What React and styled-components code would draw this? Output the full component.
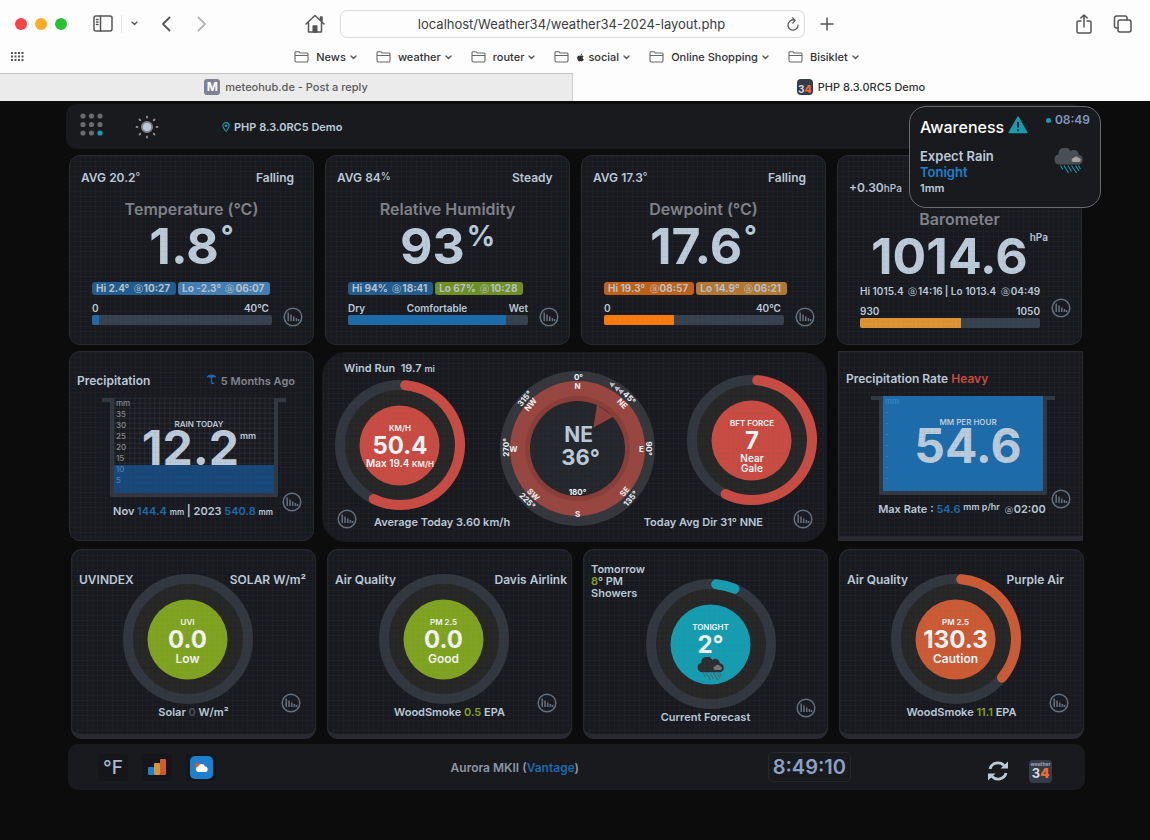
import React from 'react'
import styled, { createGlobalStyle } from 'styled-components'
import { FaApple } from 'react-icons/fa'

const ink = '#bccbd9'
const blue = '#1c6bab'
const green = '#80a41f'
const red = '#c94b41'
const teal = '#159eb1'
const orange = '#cc5b33'

const GlobalStyle = createGlobalStyle`
  * {
    box-sizing: border-box;
  }
  body {
    margin: 0;
    min-height: 100vh;
    background: #0c0c0c;
    color: ${ink};
    font-family: Inter, "Liberation Sans", sans-serif;
    font-size: 11px;
    font-weight: 600;
  }
  button {
    padding: 0;
    border: 0;
    background: none;
    color: inherit;
    font: inherit;
  }
  a {
    color: inherit;
    text-decoration: none;
  }
  svg {
    display: block;
    flex: none;
  }
  h1, h2, p, ul {
    margin: 0;
    padding: 0;
    font-size: inherit;
    font-weight: inherit;
    list-style: none;
  }
`

/* ---------- browser ---------- */

const Browser = styled.header`
  background: #fdfdfd;
  color: #333;
  font-weight: 400;
`

const Toolbar = styled.div`
  display: flex;
  align-items: center;
  height: 47px;
  padding: 0 18px 0 15px;
`

const ToolGroup = styled.div`
  display: flex;
  flex: 1;
  align-items: center;
  justify-content: ${p => p.$end ? 'flex-end' : 'flex-start'};
  gap: ${p => p.$end ? 20 : 8}px;
`

const Light = styled.span`
  width: 12px;
  height: 12px;
  border-radius: 50%;
  background: ${p => p.$color};
`

const Divider = styled.span`
  width: 1px;
  height: 18px;
  background: #e2e2e2;
`

const SidebarButton = styled.button`
  margin-left: 18px;
`

const BackButton = styled.button`
  margin: 0 18px 0 14px;
`

const AddressGroup = styled.div`
  display: flex;
  align-items: center;
  gap: 15px;
  margin-right: 8px;
`

const AddressBox = styled.div`
  display: flex;
  align-items: center;
  width: 40.5vw;
  height: 28px;
  padding: 0 4px 0 16px;
  border: 1px solid #d9d9d9;
  border-radius: 7px;
`

const AddressInput = styled.input`
  flex: 1;
  min-width: 0;
  border: 0;
  outline: 0;
  background: none;
  color: #3c3c3c;
  font: inherit;
  font-size: 13px;
  text-align: center;
`

const Bookmarks = styled.nav`
  display: flex;
  align-items: center;
  height: 26px;
  padding: 0 20px 6px 11px;
`

const BookmarkList = styled.ul`
  display: flex;
  flex: 1;
  justify-content: center;
  gap: 18px;
`

const Bookmark = styled.button`
  display: flex;
  align-items: center;
  gap: 7px;
  font-size: 11px;
  font-weight: 500;
  span {
    display: flex;
    align-items: center;
    gap: 3px;
  }
`

const Tabs = styled.div`
  display: grid;
  grid-template-columns: 573fr 577fr;
  height: 28px;
`

const Tab = styled.a`
  display: flex;
  align-items: center;
  justify-content: center;
  gap: 5px;
  padding-bottom: 2px;
  border-top: 1px solid ${p => p.$active ? '#fdfdfd' : '#c2c2c2'};
  border-right: 1px solid ${p => p.$active ? '#fdfdfd' : '#d0d0d0'};
  background: ${p => p.$active ? '#fdfdfd' : '#ebebeb'};
  color: ${p => p.$active ? '#333' : '#5a5a5a'};
  font-weight: 500;
`

const Favicon = styled.span`
  width: 16px;
  height: 16px;
  border-radius: 3px;
  background: #7f8092;
  color: #fff;
  font-size: 12px;
  font-weight: 700;
  line-height: 16px;
  text-align: center;
`

/* ---------- dashboard ---------- */

const Dashboard = styled.main`
  position: relative;
  max-width: 1020px;
  margin: 0 auto;
  padding-top: 3px;
`

const TopBar = styled.header`
  display: flex;
  align-items: center;
  height: 45px;
  margin: 0 3px 0 1px;
  padding: 0 14px;
  border-radius: 10px;
  background: #191a1e;
`

const MenuButton = styled.button`
  padding-bottom: 4px;
`

const Station = styled.p`
  display: flex;
  align-items: center;
  gap: 4px;
  margin-left: 63px;
`

const SunButton = styled.button`
  margin-left: 31px;
`

const CardRow = styled.section`
  display: grid;
  grid-template-columns: repeat(4, 1fr);
  gap: 11px;
  margin-top: 6px;
  padding: 0 3px 0 4px;
`

const MiddleRow = styled(CardRow)`
  grid-template-columns: 245fr 508fr 245fr;
  gap: 8px;
  padding-right: 2px;
`

const DialRow = styled(CardRow)`
  margin-top: 8px;
  padding: 0 1px 0 6px;
`

const Card = styled.article`
  position: relative;
  min-height: 190px;
  border: 1px solid #292a30;
  border-bottom-width: ${p => p.$thick ? 5 : 1}px;
  border-radius: ${p => p.$square ? 0 : 11}px;
  background: #191a1f;
  &::after {
    content: "";
    position: absolute;
    inset: 0;
    border-radius: inherit;
    pointer-events: none;
    background-image:
      linear-gradient(rgba(100, 102, 110, 0.06) 1px, transparent 1px),
      linear-gradient(90deg, rgba(100, 102, 110, 0.06) 1px, transparent 1px);
    background-size: 5px 5px;
  }
`

const ReadingCard = styled(Card)`
  padding-top: ${p => p.$low ? 24 : 14}px;
`

const ReadingTop = styled.div`
  display: grid;
  grid-template-columns: 1fr 57px;
  height: 16px;
  padding-left: 11px;
  font-size: 12px;
  line-height: 16px;
  small {
    font-size: 10px;
    font-weight: 500;
    line-height: 10px;
    vertical-align: ${p => p.$flat ? 0 : 2}px;
  }
`

const ReadingTitle = styled.h2`
  margin-top: 13px;
  color: #808289;
  font-size: 16px;
  line-height: 20px;
  text-align: center;
`

const Reading = styled.p`
  display: flex;
  justify-content: center;
  gap: 2px;
  margin-top: 3px;
  font-size: 50px;
  font-weight: 700;
  line-height: 48px;
  sup {
    font-size: ${p => p.$unitSize || 28}px;
    line-height: 1;
    font-weight: ${p => p.$unitSize < 20 ? 600 : 700};
  }
`

const Extremes = styled.div`
  display: flex;
  gap: 2px;
  margin-top: ${p => p.$plain ? 5 : 12}px;
  padding-left: 22px;
  font-size: 10px;
  line-height: 12px;
  white-space: nowrap;
`

const Badge = styled.span`
  padding: 0 6px 0 4px;
  border-radius: 3px;
  background: ${p => p.$color};
  color: #b9c3cc;
  font-weight: 700;
`

const At = styled.small`
  margin: 0 1px 0 2px;
  font-size: 9px;
  font-weight: 500;
`

const Scale = styled.div`
  margin: 6px 41px 0 22px;
`

const ScaleLabels = styled.div`
  display: flex;
  justify-content: space-between;
  padding-right: ${p => p.$inset || 0}px;
  font-size: 10px;
  line-height: 14px;
`

const Track = styled.div`
  height: 10px;
  overflow: hidden;
  border-radius: 2px;
  background: #36414e;
`

const Fill = styled.div`
  height: 100%;
  background: ${p => p.$color};
`

const ChartButton = styled.button`
  position: absolute;
  z-index: 1;
  bottom: ${p => p.$bottom}px;
  ${p => p.$left ? 'left: 14px;' : `right: ${p.$right || 10}px;`}
`

/* ---------- rain ---------- */

const RainCard = styled(Card)`
  padding: ${p => p.$top}px 18px 0 7px;
`

const RainTop = styled.div`
  display: flex;
  justify-content: space-between;
  align-items: center;
  line-height: 16px;
  h2 {
    font-size: 12px;
  }
`

const RainNote = styled.span`
  display: flex;
  gap: 4px;
  color: #83868d;
`

const Vessel = styled.div`
  position: relative;
  width: 168px;
  height: 99px;
  margin: 9px auto 0 33px;
  border: solid #31363f;
  border-width: 0 4px 4px;
  border-radius: 0 0 2px 2px;
  background-image:
    linear-gradient(rgba(130, 132, 140, 0.1) 1px, transparent 1px),
    linear-gradient(90deg, rgba(130, 132, 140, 0.1) 1px, transparent 1px);
  background-size: 5px 5px;
  &::before,
  &::after {
    content: "";
    position: absolute;
    top: 0;
    width: 8px;
    height: 4px;
    background: #31363f;
  }
  &::before {
    left: -12px;
  }
  &::after {
    right: -12px;
  }
`

const Water = styled.div`
  position: absolute;
  inset: auto 0 0;
  background: ${p => p.$color};
`

const VesselScale = styled.ul`
  position: absolute;
  inset: 0 auto 0 2px;
  color: ${p => p.$color};
  font-size: 8px;
  font-weight: 500;
  line-height: 11px;
`

const VesselReading = styled.div`
  position: relative;
  padding: 20px 0 0 10px;
  font-size: 8px;
  line-height: 12px;
  text-align: center;
`

const RainValue = styled.p`
  display: flex;
  justify-content: center;
  font-size: 48px;
  font-weight: 700;
  line-height: 36px;
  sup {
    margin-left: 1px;
    font-size: 9px;
    font-weight: 600;
    line-height: 12px;
  }
`

const RainFoot = styled.p`
  height: 16px;
  margin: 6px 0 0 14px;
  line-height: 16px;
  text-align: center;
  white-space: nowrap;
  small {
    font-size: 8px;
  }
  sup {
    font-size: 9px;
    line-height: 1;
    vertical-align: 3px;
  }
`

const Tint = styled.span`
  color: ${p => p.$color};
`

/* ---------- wind ---------- */

const WindCard = styled(Card)`
  margin: 1px 3px -1px 0;
  padding: 8px 9px 0 12px;
  border-color: #191a1f;
  border-radius: 24px;
`

const WindDials = styled.div`
  display: flex;
  justify-content: space-between;
  height: 154px;
`

const WindRun = styled.p`
  margin-bottom: 4px;
  padding-left: 9px;
  line-height: 14px;
  white-space: pre;
  small {
    font-size: 9px;
  }
`

const CompassWrap = styled.div`
  padding: 10px 0 0 3px;
`

const ForceWrap = styled.div`
  padding-top: 14px;
`

const WindFoot = styled.div`
  display: flex;
  justify-content: space-between;
  padding: 0 54px 0 39px;
  line-height: 14px;
`

/* ---------- dials ---------- */

const DialBox = styled.div`
  display: grid;
  place-items: center;
  width: 130px;
  height: 130px;
  > * {
    grid-area: 1 / 1;
  }
`

const DialText = styled.div`
  padding-top: ${p => p.$drop || 0}px;
  color: #f2f6f8;
  font-size: ${p => p.$small ? 10 : 12}px;
  line-height: ${p => p.$small ? 10 : 14}px;
  text-align: center;
  small {
    display: block;
    font-size: 8px;
    line-height: 12px;
  }
  strong {
    display: block;
    font-size: 24px;
    font-weight: 700;
    line-height: 24px;
  }
  em {
    font-size: 8px;
    font-style: normal;
  }
  svg {
    margin: 0 auto;
  }
`

const DialCard = styled(Card)`
  display: grid;
  grid-template-rows: 130px 16px;
  align-content: start;
  padding-top: ${p => p.$top || 24}px;
`

const DialTop = styled.div`
  display: flex;
  grid-area: 1 / 1;
  justify-content: space-between;
  height: 12px;
  padding: 0 ${p => p.$right}px 0 7px;
  font-size: 12px;
  line-height: 12px;
  white-space: nowrap;
`

const DialPlace = styled.div`
  grid-area: 1 / 1;
  justify-self: center;
  padding: ${p => p.$shiftRight ? '0 0 0 10px' : '0 12px 0 0'};
`

const DialFoot = styled.p`
  line-height: 16px;
  text-align: center;
`

const Outlook = styled.p`
  grid-area: 1 / 1;
  margin-top: -16px;
  padding-left: 7px;
  line-height: 12px;
`

/* ---------- alert and bottom bar ---------- */

const Alert = styled.aside`
  position: absolute;
  z-index: 2;
  top: 5px;
  right: -16px;
  display: grid;
  grid-template-columns: 1fr auto;
  align-content: start;
  width: 192px;
  height: 102px;
  padding: 4px 10px 0;
  border: 1px solid #6a6b6e;
  border-radius: 17px;
  background: #191a1e;
  font-size: 13px;
  line-height: 16px;
`

const AlertTitle = styled.h2`
  display: flex;
  gap: 4px;
  padding-top: 5px;
  color: #fff;
  font-size: 16px;
  font-weight: 500;
  line-height: 22px;
`

const AlertTime = styled.time`
  display: flex;
  gap: 4px;
  justify-content: flex-end;
  align-items: center;
  height: 18px;
  color: #8099bb;
  font-size: 12px;
  &::before {
    content: "";
    width: 5px;
    height: 5px;
    border-radius: 50%;
    background: ${teal};
  }
`

const AlertBody = styled.div`
  padding-top: 10px;
  small {
    display: block;
    font-size: 11px;
  }
`

const AlertIcon = styled.div`
  justify-self: end;
  padding: 10px 6px 0 0;
`

const BottomBar = styled.footer`
  display: flex;
  align-items: center;
  height: 46px;
  margin: 5px 0 0 3px;
  padding: 0 33px 0 30px;
  border-radius: 10px;
  background: #191a1e;
`

const Tile = styled.button`
  display: grid;
  place-items: center;
  width: 30px;
  height: 27px;
  margin-right: 14px;
  border-radius: 3px;
  background: #15161a;
  color: #a9b9d0;
  font-size: 19px;
  font-weight: 500;
`

const Model = styled.p`
  flex: 1;
  padding-left: 32px;
  color: #8d97a5;
  font-size: 12px;
  text-align: center;
`

const Clock = styled.time`
  padding: 0 4px;
  border: 1px solid #28292e;
  border-radius: 5px;
  color: #8aa1c3;
  font-size: 20px;
  line-height: 28px;
`

const FooterLinks = styled.div`
  display: flex;
  align-items: center;
  gap: 21px;
  margin-left: 137px;
  padding-top: 8px;
`

const Logo = styled.a`
  display: grid;
  grid-template-rows: ${p => p.$size > 20 ? 7 : 5}px 1fr;
  width: ${p => p.$size}px;
  height: ${p => p.$size}px;
  border-radius: 4px;
  background: #363b48;
  color: #d5dbe4;
  font-size: ${p => p.$size > 20 ? 13 : 10}px;
  font-weight: 700;
  line-height: 1;
  text-align: center;
  small {
    overflow: hidden;
    color: #9aa2ae;
    font-size: 5px;
    line-height: 8px;
  }
  b {
    color: #f26a33;
  }
`

/* ---------- drawings ---------- */

function Line({ w = 16, h = 16, stroke = '#555', width = 1.5, children }) {
  return (
    <svg width={w} height={h} viewBox={`0 0 ${w} ${h}`} fill="none" stroke={stroke}
      strokeWidth={width} strokeLinecap="round" strokeLinejoin="round" aria-hidden="true">
      {children}
    </svg>
  )
}

const Chevron = () => <Line w={9} h={5} width={1.4}><path d="M2 1l2.500 2.500L7 1" /></Line>

function ChartIcon() {
  return (
    <Line w={20} h={20} stroke="#637180" width={1.5}>
      <circle cx="10" cy="10" r="8.800" />
      <path strokeLinecap="butt" d="M5.200 5.500V14M8 7.500V14M10.700 9.500V14M13.400 11V14M15.500 12V14" />
    </Line>
  )
}

function RainCloud({ cloud, puff, rain, w = 30, h = 26 }) {
  return (
    <svg width={w} height={h} viewBox="0 0 30 26" aria-hidden="true">
      <path fill={cloud} d="M5.500 16.500a5 5 0 0 1-1-9.900A6.300 6.300 0 0 1 16.500 3.300 4.700 4.700 0 0 1 24.500 6.700a5 5 0 0 1 .5 9.800z" />
      <path fill={puff} d="M19.500 14a2 2 0 0 1 .2-4 2.800 2.800 0 0 1 5 0 2 2 0 0 1 .3 4z" />
      <path stroke={rain} strokeWidth="1.100" d="M6.500 17.500l2.500 4M10 17.500l4.500 7.500M14 17.500l3.500 6M17.500 17.500l5 7.500M21.500 17.500l3.500 5.500M24.500 17.500l2 3.500" />
    </svg>
  )
}

const polar = (r, deg) => {
  const a = (deg * Math.PI) / 180
  return `${65 + r * Math.sin(a)} ${65 - r * Math.cos(a)}`
}

function Dial({ color, end, small, drop, children }) {
  return (
    <DialBox>
      <svg width="130" height="130" viewBox="0 0 130 130" aria-hidden="true">
        <circle cx="65" cy="65" r="60" fill="#262626" stroke="#31363f" strokeWidth="10" />
        {end && (
          <path d={`M${polar(60, 5)}A60 60 0 ${end > 185 ? 1 : 0} 1 ${polar(60, end)}`}
            fill="none" stroke={color} strokeWidth="10" strokeLinecap="round" />
        )}
        <circle cx="64.500" cy="65.500" r="40" fill={color} />
      </svg>
      <DialText $small={small} $drop={drop}>{children}</DialText>
    </DialBox>
  )
}

// label, x, y, rotation; the compass centre is 0,0
const compassMarks = [
  ['0°', 1, -72, 0], ['N', 0, -63, 0],
  ['45°', 52, -51, 45], ['NE', 45, -45, 45],
  ['90°', 71, 0, 90], ['E', 64, 0, 0],
  ['135°', 53, 50, -50], ['SE', 47, 43, -50],
  ['180°', 0, 43, 0], ['S', 0, 65, 0],
  ['225°', -50, 52, 45], ['SW', -44, 46, 45],
  ['270°', -72, -1, -90], ['W', -64, 0, 0],
  ['315°', -53, -50, -50], ['NW', -47, -44, -50],
]

function Compass() {
  return (
    <svg width="155" height="155" viewBox="-77.500 -77.500 155 155" role="img" aria-label="Wind direction">
      <circle r="77.500" fill="#34363b" />
      <circle r="67.500" fill="#98463f" />
      <circle r="52.500" fill="#8b3d38" />
      <circle r="47.500" fill="#23262b" />
      <path d="M19.500-44L36-32 16-21z" fill="#8f403a" />
      <path d="M32-66l6 1-4 4zM37-62l6 1-4 4zM41-59l6 1-4 4z" fill="#b9bcc0" />
      <g fill="#f2f6f8" fontSize="8" fontWeight="700" textAnchor="middle">
        {compassMarks.map(([label, x, y, turn]) => (
          <text key={label} dy="3" transform={`translate(${x} ${y}) rotate(${turn})`}>{label}</text>
        ))}
      </g>
      <g fill={ink} fontWeight="700" textAnchor="middle">
        <text x="1" y="-7" fontSize="21">NE</text>
        <text x="3" y="16" fontSize="22">36°</text>
      </g>
    </svg>
  )
}

const folders = ['News', 'weather', 'router', 'social', 'Online Shopping', 'Bisiklet']

function BrowserBar() {
  return (
    <Browser>
      <Toolbar>
        <ToolGroup>
          <Light $color="#fc4245" />
          <Light $color="#fdac23" />
          <Light $color="#28c131" />
          <SidebarButton aria-label="Sidebar">
            <Line w={20} h={17}>
              <rect x="1" y="1" width="18" height="15" rx="2" />
              <path d="M7.500 1v15M3.500 4.500H5M3.500 7H5M3.500 9.500H5" />
            </Line>
          </SidebarButton>
          <Divider />
          <Chevron />
          <BackButton aria-label="Back">
            <Line w={10} h={16} width={1.8}><path d="M8.500 1.500L2 8l6.500 6.500" /></Line>
          </BackButton>
          <button aria-label="Forward">
            <Line w={10} h={16} width={1.8} stroke="#b5b5b5"><path d="M1.500 1.500L8 8l-6.500 6.500" /></Line>
          </button>
        </ToolGroup>
        <AddressGroup>
          <button aria-label="Home">
            <Line w={20} h={20}>
              <path d="M1 10l9-8.500 9 8.500M3.500 8.500V18h13V8.500M15.500 6V3h1.500v4" />
              <path d="M8.200 18v-6h3.600v6z" fill="#555" />
            </Line>
          </button>
          <AddressBox>
            <AddressInput aria-label="Address" readOnly value="localhost/Weather34/weather34-2024-layout.php" />
            <button aria-label="Reload">
              <Line w={14} h={14} width={1.2}>
                <path d="M3.800 4.300A5 5 0 1 0 12 8M3.800 4.300A5 5 0 0 1 9 3.400M6.500.8L9.200 3.400 6.800 6.200" />
              </Line>
            </button>
          </AddressBox>
          <button aria-label="New tab">
            <Line w={14} h={14}><path d="M7 1v12M1 7h12" /></Line>
          </button>
        </AddressGroup>
        <ToolGroup $end>
          <button aria-label="Share">
            <Line w={18} h={20}>
              <path d="M6 7H3.500A1.500 1.500 0 0 0 2 8.500v9A1.500 1.500 0 0 0 3.500 19h11a1.500 1.500 0 0 0 1.500-1.500v-9A1.500 1.500 0 0 0 14.500 7H12M9 13V1M5.800 4L9 1l3.200 3" />
            </Line>
          </button>
          <button aria-label="Tab overview">
            <Line w={19} h={18}>
              <rect x="5" y="5" width="13" height="12" rx="2" />
              <path d="M5 13H3.500A2 2 0 0 1 1.500 11V3a2 2 0 0 1 2-2H12a2 2 0 0 1 2 2v2" />
            </Line>
          </button>
        </ToolGroup>
      </Toolbar>
      <Bookmarks>
        <svg width="13" height="10" fill="#555" aria-hidden="true">
          {[0, 1, 2].map(y => [0, 1, 2, 3].map(x => (
            <rect key={`${x}${y}`} x={x * 3.5} y={y * 3.5} width="2" height="2" />
          )))}
        </svg>
        <BookmarkList>
          {folders.map(name => (
            <li key={name}>
              <Bookmark>
                <Line w={15} h={12} width={1.1} stroke="#666">
                  <path d="M1 9.500v-8A1 1 0 0 1 2 .7h3l1.200 1.300H13a1 1 0 0 1 1 1v6.500a1.500 1.500 0 0 1-1.500 1.500h-10A1.500 1.500 0 0 1 1 9.500zM1 4.500h13" />
                </Line>
                <span>{name === 'social' && <FaApple size={9} />}{name}<Chevron /></span>
              </Bookmark>
            </li>
          ))}
        </BookmarkList>
      </Bookmarks>
      <Tabs>
        <Tab href="#reply"><Favicon>M</Favicon>meteohub.de - Post a reply</Tab>
        <Tab href="#demo" $active>
          <Logo as="span" $size={16}><small /><span>3<b>4</b></span></Logo>
          PHP 8.3.0RC5 Demo
        </Tab>
      </Tabs>
    </Browser>
  )
}

const readings = [
  {
    title: 'Temperature (°C)', value: '1.8', unit: '°', avg: '20.2', trend: 'Falling',
    hi: ['Hi 2.4°', '10:27', '#205c8f'], lo: ['Lo -2.3°', '06:07', '#437fb5'],
    labels: ['0', '40°C'], inset: 3, fill: 4, color: blue,
  },
  {
    title: 'Relative Humidity', value: '93', unit: '%', avg: '84', trend: 'Steady',
    hi: ['Hi 94%', '18:41', '#205c8f'], lo: ['Lo 67%', '10:28', '#70901f'],
    labels: ['Dry', 'Comfortable', 'Wet'], inset: 0, fill: 88, color: blue,
  },
  {
    title: 'Dewpoint (°C)', value: '17.6', unit: '°', avg: '17.3', trend: 'Falling',
    hi: ['Hi 19.3°', '08:57', '#c26114'], lo: ['Lo 14.9°', '06:21', '#b4782e'],
    labels: ['0', '40°C'], inset: 3, fill: 39, color: '#fa7d0c',
  },
]

function Chart(props) {
  return <ChartButton aria-label="Chart" {...props}><ChartIcon /></ChartButton>
}

function ReadingPanel({ item }) {
  return (
    <ReadingCard>
      <ReadingTop>
        <span>AVG {item.avg}<small>{item.unit}</small></span>
        <span>{item.trend}</span>
      </ReadingTop>
      <ReadingTitle>{item.title}</ReadingTitle>
      <Reading $unitSize={28}>{item.value}<sup>{item.unit}</sup></Reading>
      <Extremes>
        {[item.hi, item.lo].map(([text, time, color]) => (
          <Badge key={text} $color={color}>{text} <At>ⓐ</At>{time}</Badge>
        ))}
      </Extremes>
      <Scale>
        <ScaleLabels $inset={item.inset}>
          {item.labels.map(label => <span key={label}>{label}</span>)}
        </ScaleLabels>
        <Track><Fill $color={item.color} style={{ width: `${item.fill}%` }} /></Track>
      </Scale>
      <Chart $bottom={17} />
    </ReadingCard>
  )
}

export default function App() {
  return (
    <>
      <GlobalStyle />
      <BrowserBar />
      <Dashboard>
        <TopBar>
          <MenuButton aria-label="Menu">
            <svg width="24" height="24" fill="#6b6c6e" aria-hidden="true">
              {[3, 11.5, 20].map(y => [3, 11.5, 20].map(x => (
                <circle key={`${x}-${y}`} cx={x} cy={y} r="2.600" fill={x + y === 40 ? teal : undefined} />
              )))}
            </svg>
          </MenuButton>
          <SunButton aria-label="Light theme">
            <svg width="24" height="24" viewBox="-12 -12 24 24" aria-hidden="true">
              <circle r="5.200" fill="#b9c8dc" stroke="#7e7f80" strokeWidth="1.800" />
              <g fill="#8e9092">
                {[0, 45, 90, 135, 180, 225, 270, 315].map(a => (
                  <ellipse key={a} cy="-10" rx="1" ry="1.500" transform={`rotate(${a})`} />
                ))}
              </g>
            </svg>
          </SunButton>
          <Station>
            <svg width="8" height="10" viewBox="0 0 8 10" aria-hidden="true">
              <path d="M4 9.500C2.500 7.500.8 5.700.8 3.800a3.200 3.200 0 0 1 6.400 0C7.200 5.700 5.500 7.500 4 9.500z" fill="none" stroke={teal} strokeWidth="1.100" />
              <circle cx="4" cy="3.700" r="1.300" fill={teal} />
            </svg>
            PHP 8.3.0RC5 Demo
          </Station>
        </TopBar>

        <Alert>
          <AlertTitle>
            Awareness
            <svg width="20" height="18" viewBox="0 0 20 18" aria-hidden="true">
              <path d="M10 1.200L18.800 16.500H1.200z" fill={teal} stroke={teal} strokeWidth="1.500" strokeLinejoin="round" />
              <path d="M10 6v5.500M10 13.200v2" stroke="#191a1e" strokeWidth="2" />
            </svg>
          </AlertTitle>
          <AlertTime>08:49</AlertTime>
          <AlertBody>
            <p>Expect Rain</p>
            <p><Tint $color="#1f80cc">Tonight</Tint></p>
            <small>1mm</small>
          </AlertBody>
          <AlertIcon><RainCloud cloud="#4a4f55" puff="#aaa09d" rain={teal} /></AlertIcon>
        </Alert>

        <CardRow>
          {readings.map(item => <ReadingPanel key={item.title} item={item} />)}
          <ReadingCard $low>
            <ReadingTop $flat><span>+0.30<small>hPa</small></span></ReadingTop>
            <ReadingTitle>Barometer</ReadingTitle>
            <Reading $unitSize={10}>1014.6<sup>hPa</sup></Reading>
            <Extremes $plain>
              <span>Hi 1015.4 <At>ⓐ</At>14:16</span>
              <span>| Lo 1013.4 <At>ⓐ</At>04:49</span>
            </Extremes>
            <Scale>
              <ScaleLabels><span>930</span><span>1050</span></ScaleLabels>
              <Track><Fill $color="#df9434" style={{ width: '56%' }} /></Track>
            </Scale>
            <Chart $bottom={26} />
          </ReadingCard>
        </CardRow>

        <MiddleRow>
          <RainCard $top={21}>
            <RainTop>
              <h2>Precipitation</h2>
              <RainNote>
                <svg width="11" height="12" viewBox="0 0 11 12" aria-hidden="true">
                  <path d="M.5 4.800C1.500.5 9 .5 10.500 4.800L8.500 4 7 4.800 5.500 4 4 4.800 2.500 4z" fill="#1768c0" />
                  <path d="M5.500 3.500v6c0 1.500 2.500 1.500 2.500 0" fill="none" stroke="#1768c0" strokeWidth="1.200" />
                </svg>
                5 Months Ago
              </RainNote>
            </RainTop>
            <Vessel>
              <Water $color="#174879" style={{ height: '28px' }} />
              <VesselScale $color="#848b94">
                {['mm', 35, 30, 25, 20, 15].map(n => <li key={n}>{n}</li>)}
                {[10, 5].map(n => <li key={n}><Tint $color="#4a82b6">{n}</Tint></li>)}
              </VesselScale>
              <VesselReading>
                RAIN TODAY
                <RainValue>12.2<sup>mm</sup></RainValue>
              </VesselReading>
            </Vessel>
            <RainFoot>
              Nov <Tint $color={blue}>144.4</Tint> <small>mm</small> | 2023 <Tint $color={blue}>540.8</Tint> <small>mm</small>
            </RainFoot>
            <Chart $bottom={28} $right={11} />
          </RainCard>

          <WindCard>
            <WindDials>
              <div>
                <WindRun>Wind Run  19.7 <small>mi</small></WindRun>
                <Dial color={red} end={206} small>
                  <small>KM/H</small>
                  <strong>50.4</strong>
                  Max 19.4 <em>KM/H</em>
                </Dial>
              </div>
              <CompassWrap><Compass /></CompassWrap>
              <ForceWrap>
                <Dial color={red} end={206} small drop={10}>
                  <small>BFT FORCE</small>
                  <strong>7</strong>
                  Near<br />Gale
                </Dial>
              </ForceWrap>
            </WindDials>
            <WindFoot>
              <span>Average Today 3.60 km/h</span>
              <span>Today Avg Dir 31° NNE</span>
            </WindFoot>
            <Chart $bottom={12} $left />
            <Chart $bottom={12} $right={13} />
          </WindCard>

          <RainCard $top={19} $square $thick>
            <RainTop><h2>Precipitation Rate <Tint $color={red}>Heavy</Tint></h2></RainTop>
            <Vessel>
              <Water $color="#1c6bab" style={{ height: '100%' }} />
              <VesselScale $color="#3b86c2">
                <li>mm</li>
                {[1, 2, 3, 4, 5, 6, 7].map(n => <li key={n}>-</li>)}
              </VesselScale>
              <VesselReading>
                MM PER HOUR
                <RainValue>54.6</RainValue>
              </VesselReading>
            </Vessel>
            <RainFoot>
              Max Rate : <Tint $color={blue}>54.6</Tint> <sup>mm p/hr</sup> <At>ⓐ</At>02:00
            </RainFoot>
            <Chart $bottom={27} $right={11} />
          </RainCard>
        </MiddleRow>

        <DialRow>
          <DialCard $thick>
            <DialTop $right={9}><h2>UVINDEX</h2><span>SOLAR W/m²</span></DialTop>
            <DialPlace>
              <Dial color={green} drop={4}><small>UVI</small><strong>0.0</strong>Low</Dial>
            </DialPlace>
            <DialFoot>Solar <Tint $color="#4a525b">0</Tint> W/m²</DialFoot>
            <Chart $bottom={21} $right={14} />
          </DialCard>
          <DialCard $thick>
            <DialTop $right={4}><h2>Air Quality</h2><span>Davis Airlink</span></DialTop>
            <DialPlace>
              <Dial color={green} drop={4}><small>PM 2.5</small><strong>0.0</strong>Good</Dial>
            </DialPlace>
            <DialFoot>WoodSmoke <Tint $color={green}>0.5</Tint> EPA</DialFoot>
            <Chart $bottom={21} $right={14} />
          </DialCard>
          <DialCard $thick $top={29}>
            <Outlook>Tomorrow<br /><Tint $color={green}>8</Tint>° PM<br />Showers</Outlook>
            <DialPlace $shiftRight>
              <Dial color={teal} end={23} drop={14}>
                <small>TONIGHT</small>
                <strong>2°</strong>
                <RainCloud cloud="#2b2d30" puff="#727679" rain="#5b5f66" w={28} h={24} />
              </Dial>
            </DialPlace>
            <DialFoot>Current Forecast</DialFoot>
            <Chart $bottom={16} $right={11} />
          </DialCard>
          <DialCard $thick>
            <DialTop $right={19}><h2>Air Quality</h2><span>Purple Air</span></DialTop>
            <DialPlace>
              <Dial color={orange} end={130} drop={4}><small>PM 2.5</small><strong>130.3</strong>Caution</Dial>
            </DialPlace>
            <DialFoot>WoodSmoke <Tint $color={green}>11.1</Tint> EPA</DialFoot>
            <Chart $bottom={21} $right={14} />
          </DialCard>
        </DialRow>

        <BottomBar>
          <Tile aria-label="Switch to Fahrenheit">°F</Tile>
          <Tile aria-label="Charts">
            <svg width="19" height="17" aria-hidden="true">
              <rect y="8" width="6" height="8" rx="1" fill="#1c80cf" />
              <rect x="6" y="4" width="6" height="12" rx="1" fill="#dc9434" />
              <rect x="12" width="6" height="16" rx="1" fill={orange} />
            </svg>
          </Tile>
          <Tile aria-label="Forecast">
            <svg width="23" height="23" aria-hidden="true">
              <rect width="23" height="23" rx="5" fill="#1c80cf" />
              <circle cx="8" cy="9.500" r="3" fill={orange} />
              <path d="M8 16a2.800 2.800 0 0 1 0-5.500 3.800 3.800 0 0 1 7-.2 3 3 0 0 1 1 5.700z" fill="#fff" />
            </svg>
          </Tile>
          <Model>Aurora MKII (<Tint as="a" href="#vantage" $color={blue}>Vantage</Tint>)</Model>
          <Clock>8:49:10</Clock>
          <FooterLinks>
            <button aria-label="Refresh">
              <svg width="20" height="20" viewBox="0 0 20 20" aria-hidden="true">
                <path d="M2 8C3.500 1.500 12 .2 16 4.500M18 12c-1.500 6.500-10 7.800-14 3.500" fill="none" stroke={ink} strokeWidth="2.800" />
                <path d="M20 .5V7.500h-7.500zM0 19.500v-7h7.500z" fill={ink} />
              </svg>
            </button>
            <Logo href="#weather34" $size={23}><small>weather</small><span>3<b>4</b></span></Logo>
          </FooterLinks>
        </BottomBar>
      </Dashboard>
    </>
  )
}
